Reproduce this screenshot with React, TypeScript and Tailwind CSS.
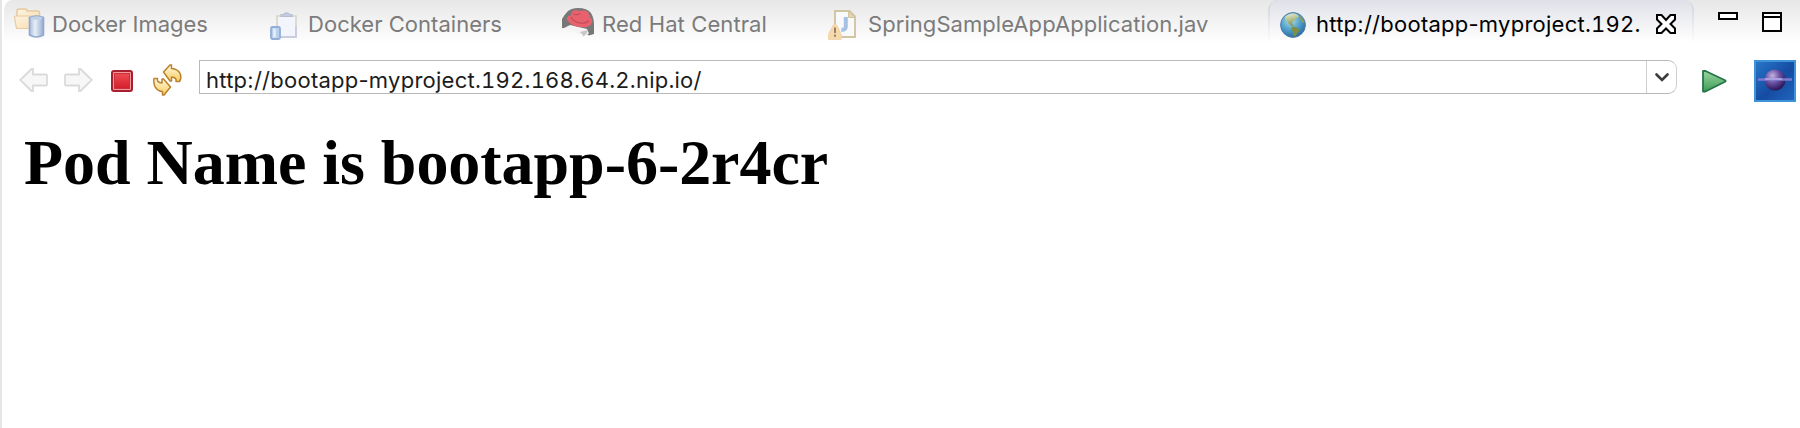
import type { ReactNode } from "react";

function DockerImagesIcon() {
  return (
    <svg width="32" height="32" viewBox="0 0 32 32" className="shrink-0">
      <defs>
        <linearGradient id="cyl" x1="0" x2="1">
          <stop offset="0" stopColor="#a9bdd9" />
          <stop offset=".4" stopColor="#e8eef7" />
          <stop offset="1" stopColor="#96acd0" />
        </linearGradient>
        <linearGradient id="fold" x1="0" y1="0" x2="1" y2="1">
          <stop offset="0" stopColor="#fdf3de" />
          <stop offset="1" stopColor="#f6ddb0" />
        </linearGradient>
      </defs>
      <path d="M4 19V3q0-2 2-2h6q2 0 2 2h11q1.500 0 1.500 2v4" fill="url(#fold)" stroke="#e6c9a0" strokeWidth="1.500" />
      <path d="M3.500 20.500 1.500 9.500Q1.500 8 3 8H27v12.500z" fill="url(#fold)" stroke="#e6cba4" strokeWidth="1.200" />
      <path d="M16.500 9.500q7-3 14 0V27q-7 4-14 0z" fill="url(#cyl)" stroke="#8fa9cf" strokeWidth="1.600" />
      <ellipse cx="23.500" cy="10" rx="6" ry="1.800" fill="#c0d0e5" />
    </svg>
  );
}

function DockerContainersIcon() {
  return (
    <svg width="32" height="32" viewBox="0 0 32 32" className="shrink-0">
      <rect x="11" y="8" width="19" height="21" fill="#f3f5fc" stroke="#dad9cd" strokeWidth="1.800" />
      <path d="M13 29h17V18" fill="none" stroke="#c9cde0" strokeWidth="1.800" />
      <path d="M15 8.500V6.500h2.500Q18.500 4.800 20.500 4.800t3 1.700H26v2z" fill="#c4cbdf" stroke="#b7bed2" strokeWidth="1.200" />
      <rect x="5" y="19" width="9" height="12" rx="1.500" fill="#b8d0ed" stroke="#93aed7" strokeWidth="1.800" />
      <path d="M8.500 20.500v9" stroke="#e5f0fb" strokeWidth="2.500" />
    </svg>
  );
}

function RedHatIcon() {
  return (
    <svg width="32" height="32" viewBox="0 0 32 32" className="shrink-0">
      <path d="M0 20V11Q3 6 6 3 10 0 16 0q9 0 13 5 3 5 3 12v9l-5 1.500L20 22 8 20.500z" fill="#777" />
      <path d="M1 20.500 8 17l17 4 2 4.500-4 1.500-2 2-2-3-5-1-1-2-5-.500z" fill="#f3f3f3" />
      <path d="M18 24l8-2-1.500 3.500-3 3-1-2z" fill="#c6c6c6" />
      <path d="M5 9.500Q6 7 9 7.500 9 1.500 14.500 2.200q3 .800 5 .600 5-1 6.500 1.500 1.500 2 2 5 3 2.500 2 5.400-2 4.500-9 4.500-8 0-13.500-4.500Q4 12 5 9.500z" fill="#e8626e" />
      <path d="M9 9q2 4.500 9 6 6 1 9-2.500M11 6q4 1.500 7-.500" fill="none" stroke="#c44f5a" strokeWidth="1.300" />
    </svg>
  );
}

function JavaFileIcon() {
  return (
    <svg width="32" height="32" viewBox="0 0 32 32" className="shrink-0">
      <path d="M7 3h14.500l5.500 5.500V29H7z" fill="#f8f9fb" stroke="#d2c5a4" strokeWidth="1.900" />
      <path d="M20.500 3v6.500H27z" fill="#e3d5b1" stroke="#d2c5a4" />
      <path d="M17.800 9v9.500q0 3.800-4.500 3.200" fill="none" stroke="#a6c1e2" strokeWidth="4" />
      <path d="M5 17.500Q7 15 9 17.500L13.500 27v3.500q0 1.200-1 1.200H1.200q-1 0-1-1.200V27z" fill="#f5d8ac" stroke="#efcfa4" strokeWidth=".8" />
      <path d="M7 19.500v5.500M7 26.500v2.200" stroke="#9a835f" strokeWidth="2" />
    </svg>
  );
}

function GlobeIcon() {
  return (
    <svg width="26" height="32" viewBox="0 0 26 32" className="shrink-0">
      <defs>
        <radialGradient id="sea" cx=".4" cy=".3" r=".75">
          <stop offset="0" stopColor="#b5dcea" />
          <stop offset=".55" stopColor="#4f9fca" />
          <stop offset="1" stopColor="#2b6499" />
        </radialGradient>
        <linearGradient id="land" x1="0" y1="0" x2=".3" y2="1">
          <stop offset="0" stopColor="#eef0dc" />
          <stop offset=".5" stopColor="#b9c494" />
          <stop offset="1" stopColor="#84944d" />
        </linearGradient>
      </defs>
      <circle cx="13" cy="17" r="12.400" fill="url(#sea)" stroke="#4d7ea5" strokeWidth="1" />
      <path d="M5 9q4-4 9-3.500 4 .500 5 3.500l-3 1-1 2-2 1-1 3 2 2h-2l-3-2-3-4z" fill="url(#land)" />
      <path d="M12 19q4-1 6 1.500l1.500 2-2.500 3-2 3-1.500-.500-.5-4-2-3z" fill="#7f8f43" />
      <path d="M19.500 7.500q4 3 5 7l-2 .500-2-3z" fill="#8a9b62" />
    </svg>
  );
}

function Tab({ className, icon, textClass, children }: { className: string; icon: ReactNode; textClass: string; children: ReactNode }) {
  return (
    <div className={`flex h-full shrink-0 items-start pt-2 whitespace-nowrap ${className}`}>
      {icon}
      <span className={`text-[22px] leading-8 ${textClass}`}>{children}</span>
    </div>
  );
}

function Url({ host, rest }: { host: string; rest: string }) {
  return (
    <>
      <span className="tracking-[0.25px]">{host}</span>
      <span className="tracking-[0.22px] tabular-nums">{rest}</span>
    </>
  );
}

function TabBar() {
  return (
    <header className="flex h-[46px] rounded-tl-[10px] border-l-2 border-white bg-linear-to-b from-[#e7e7e7] to-white to-95%">
      <Tab className="w-[262px] pl-[9px] text-[#7b7b7b]" icon={<DockerImagesIcon />} textClass="ml-[7px]">
        Docker Images
      </Tab>
      <Tab className="w-[296px] text-[#7b7b7b]" icon={<DockerContainersIcon />} textClass="ml-[10px] tracking-[0.03px]">
        Docker Containers
      </Tab>
      <Tab className="w-[266px] text-[#7b7b7b]" icon={<RedHatIcon />} textClass="ml-[8px] tracking-[0.1px]">
        Red Hat Central
      </Tab>
      <Tab className="w-[440px] text-[#7b7b7b]" icon={<JavaFileIcon />} textClass="ml-[8px] tracking-[0.06px]">
        SpringSampleAppApplication.jav
      </Tab>
      <div className="flex w-[426px] shrink-0 rounded-t-[10px] bg-linear-to-b from-[#cfcfd8] to-white to-95% px-0.5">
        <div className="flex w-full rounded-t-[8px] bg-linear-to-b from-[#e0e1e8] to-white to-90%">
          <Tab className="w-[386px] pl-[10px] text-black" icon={<GlobeIcon />} textClass="ml-[10px]">
            <Url host="http://bootapp-myproject" rest=".192." />
          </Tab>
          <svg width="20" height="20" viewBox="0 0 20 20" className="mt-[14px]">
            <path d="M1 1h4.500L10 6l4.500-5H19v4.500L14.500 10l4.500 4.500V19h-4.500L10 14.500 5.500 19H1v-4.500L5.500 10 1 5.500z" fill="#fff" stroke="#000" strokeWidth="2" />
          </svg>
        </div>
      </div>
      <div className="mt-3 ml-6 h-2 w-5 border-2 border-black bg-white" />
      <div className="mt-3 ml-6 h-5 w-5 border-2 border-black bg-white">
        <div className="mt-0.5 h-0.5 bg-black" />
      </div>
    </header>
  );
}

function ArrowIcon({ flip = false }: { flip?: boolean }) {
  return (
    <svg width="29" height="24" viewBox="0 0 29 24" className={flip ? "-scale-x-100" : ""}>
      <path d="M1.200 12 12.500 1H14v5.500H27q1 0 1 1v9q0 1-1 1H14V23h-1.500z" fill="#f7f7f7" stroke="#dadada" strokeWidth="1.800" />
    </svg>
  );
}

function RefreshIcon() {
  return (
    <svg width="30" height="32" viewBox="0 0 30 32">
      <defs>
        <linearGradient id="gold" x1="0" y1="0" x2="0" y2="1">
          <stop offset="0" stopColor="#fff8dc" />
          <stop offset="1" stopColor="#f8cc62" />
        </linearGradient>
      </defs>
      <g fill="url(#gold)" stroke="#b9822c" strokeWidth="1.500" strokeLinejoin="round">
        <path d="M10.500 8 17 1h1.500v3.500q7 .5 9 6 1 4-1 7H23q1-4-4.500-4.500V17H17z" />
        <path d="M1 14.500h3.500Q3.500 18.500 9 19v-4h1.500l7 8-6.500 8H9.500v-3.500q-6-.5-8-6Q.5 18 1 14.500z" />
      </g>
    </svg>
  );
}

function EclipseIcon() {
  return (
    <svg width="42" height="42" viewBox="0 0 42 42">
      <defs>
        <linearGradient id="sky" x1="0" y1="0" x2="1" y2="1">
          <stop offset="0" stopColor="#2878ca" />
          <stop offset=".55" stopColor="#154ca2" />
          <stop offset="1" stopColor="#2265bd" />
        </linearGradient>
        <radialGradient id="planet" cx=".38" cy=".3" r=".7">
          <stop offset="0" stopColor="#c3b3de" />
          <stop offset=".5" stopColor="#6850a4" />
          <stop offset="1" stopColor="#2a1658" />
        </radialGradient>
      </defs>
      <rect x="1" y="1" width="40" height="40" fill="url(#sky)" stroke="#3f93d9" strokeWidth="2" />
      <circle cx="21" cy="20" r="10.500" fill="url(#planet)" />
      <path d="M4 19.500h34" stroke="#7f79cf" strokeWidth="2.500" />
      <path d="M11 19h17" stroke="#b9aee4" strokeWidth="1.500" />
    </svg>
  );
}

function AddressBar() {
  return (
    <div className="flex h-[62px] items-start pl-[17px]">
      <div className="flex gap-4 pt-[22px]">
        <ArrowIcon />
        <ArrowIcon flip />
      </div>
      <svg width="22" height="22" viewBox="0 0 22 22" className="mt-[24px] ml-[18px]">
        <defs>
          <linearGradient id="stop" x1="0" y1="0" x2="0" y2="1">
            <stop offset="0" stopColor="#ec4b51" />
            <stop offset="1" stopColor="#d41f2d" />
          </linearGradient>
        </defs>
        <rect x="1" y="1" width="20" height="20" rx="2" fill="#f29a9d" stroke="#a91f2f" strokeWidth="2" />
        <rect x="3.500" y="3.500" width="15" height="15" fill="url(#stop)" stroke="#c9303a" />
      </svg>
      <div className="mt-[18px] ml-[20px]">
        <RefreshIcon />
      </div>
      <div className="mt-[14px] ml-4 flex h-[34px] w-[1478px] rounded-r-[9px] border border-[#b9b9b9] border-r-[#cfcfcf] bg-white">
        <div className="flex-1 border-r border-[#d0d0d0] pl-[6px] text-[22px] leading-[38px] whitespace-nowrap text-[#1c1c1c]">
          <Url host="http://bootapp-myproject" rest=".192.168.64.2.nip.io/" />
        </div>
        <div className="flex w-[29px] items-center justify-center">
          <svg width="14" height="9" viewBox="0 0 14 9">
            <path d="M1.500 1.500 7 7l5.500-5.500" fill="none" stroke="#3c3c3c" strokeWidth="2.600" strokeLinecap="round" />
          </svg>
        </div>
      </div>
      <svg width="25" height="23" viewBox="0 0 25 23" className="mt-6 ml-[25px]">
        <defs>
          <linearGradient id="go" x1="0" y1="0" x2="0" y2="1">
            <stop offset="0" stopColor="#9bd5a1" />
            <stop offset="1" stopColor="#3d9c56" />
          </linearGradient>
        </defs>
        <path d="M1 1h2.500L23.500 10.500v1L3.500 21.500H1z" fill="url(#go)" stroke="#26754a" strokeWidth="1.800" strokeLinejoin="round" />
      </svg>
      <div className="mt-[14px] ml-[27px]">
        <EclipseIcon />
      </div>
    </div>
  );
}

export default function App() {
  return (
    <div className="h-[428px] w-[1800px] overflow-hidden border-l-2 border-[#e6e6e6] bg-white font-['Inter',sans-serif]">
      <TabBar />
      <AddressBar />
      <main className="pt-[18px] pl-[22px]">
        <h1 className="font-['Liberation_Serif',serif] text-[64px] leading-[74px] font-bold tracking-[-0.04px] text-black">Pod Name is bootapp-6-2r4cr</h1>
      </main>
    </div>
  );
}
